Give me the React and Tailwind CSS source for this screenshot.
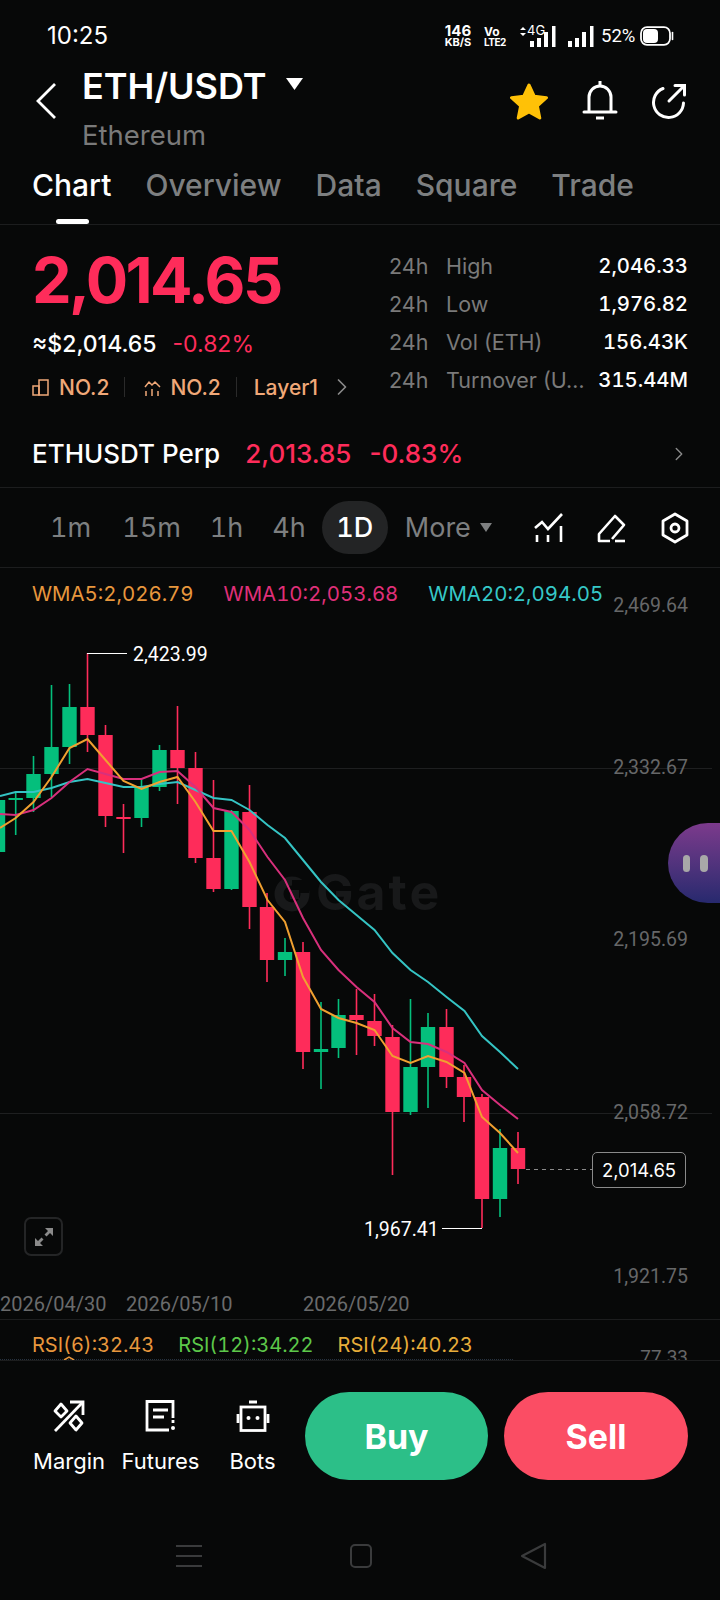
import React from "react"
import { ChevronRight } from "lucide-react"

const RED = "#fe2c5a"
const GREEN = "#04bf7c"

// x, wick top, body top, body bottom, wick bottom (page pixels)
const candles = [
  [-2, 790, 800, 852, 860, "g"],
  [15.7, 793, 798, 800, 835, "g"],
  [33.5, 756, 774, 798, 812, "g"],
  [51.5, 685, 747, 774, 797, "g"],
  [69.5, 684, 707, 747, 764, "g"],
  [87.5, 653, 707, 735, 752, "r"],
  [105.5, 725, 735, 816, 827, "r"],
  [123.5, 804, 817, 819, 853, "r"],
  [141.5, 778, 787, 818, 827, "g"],
  [159.5, 745, 750, 787, 791, "g"],
  [177.5, 706, 750, 768, 804, "r"],
  [195.5, 752, 768, 858, 863, "r"],
  [213.5, 780, 858, 889, 892, "r"],
  [231.5, 810, 811, 889, 890, "g"],
  [249.5, 785, 812, 907, 929, "r"],
  [267, 893, 907, 960, 982, "r"],
  [285, 938, 952, 960, 976, "g"],
  [303, 942, 952, 1052, 1069, "r"],
  [321, 1002, 1049, 1052, 1089, "g"],
  [338.5, 999, 1015, 1048, 1058, "g"],
  [356.5, 989, 1015, 1020, 1055, "r"],
  [374.5, 994, 1021, 1036, 1046, "r"],
  [392.5, 1025, 1037, 1112, 1175, "r"],
  [410.5, 999, 1067, 1112, 1115, "g"],
  [428, 1013, 1027, 1067, 1108, "g"],
  [446.5, 1009, 1027, 1077, 1088, "r"],
  [464, 1065, 1077, 1097, 1122, "r"],
  [482, 1094, 1097, 1199, 1228, "r"],
  [500, 1129, 1148, 1199, 1217, "g"],
  [518, 1132, 1148, 1169, 1184, "r"],
]

const wma5 = "0,828 15.7,818 33.5,802 51.5,777 69.5,748 87.5,739 105.5,760 123.5,781 141.5,789 159.5,782 177.5,777 195.5,802 213.5,831 231.5,831 249.5,862 267.5,900 285,922 303,977 321,1009 338.5,1018 356.5,1023 374.5,1030 392.5,1056 410.5,1063 428,1056 446.5,1062 464.5,1073 482,1117 500,1133 518,1153"
const wma10 = "0,814 15.7,815 33.5,810 51.5,798 69.5,782 87.5,769 105.5,774 123.5,779 141.5,779 159.5,772 177.5,771 195.5,787 213.5,808 231.5,812 249.5,830 267.5,857 285,880 303,918 321,950 338.5,970 356.5,987 374.5,1002 392.5,1028 410.5,1042 428,1044 446.5,1052 464.5,1063 482,1090 500,1105 518,1119"
const wma20 = "0,796 15.7,792 33.5,792 51.5,788 69.5,782 87.5,779 105.5,783 123.5,787 141.5,787 159.5,784 177.5,782 195.5,790 213.5,798 231.5,800 249.5,810 267.5,825 285,838 303,860 321,882 338.5,900 356.5,915 374.5,930 392.5,953 410.5,970 428,982 446.5,997 464.5,1011 482,1036 500,1052 518,1069"

const stats = [
  ["High", "2,046.33"],
  ["Low", "1,976.82"],
  ["Vol (ETH)", "156.43K"],
  ["Turnover (U…", "315.44M"],
]

const axisLabels = [
  ["2,469.64", 605],
  ["2,332.67", 767],
  ["2,195.69", 939],
  ["2,058.72", 1112],
  ["1,921.75", 1276],
]

const StatusBar = () => (
  <div className="h-[61px] shrink-0 flex items-center justify-between pl-[47px] pr-[46px] pt-[11px] text-white">
    <span className="text-[24px] leading-none">10:25</span>
    <div className="flex items-center">
      <div className="w-[30px] flex flex-col items-center font-bold">
        <span className="text-[15px] leading-[12px]">146</span>
        <span className="text-[11px] leading-[11px]">KB/S</span>
      </div>
      <div className="w-[27px] ml-[11px] flex flex-col font-bold">
        <span className="text-[12px] leading-[11px]">Vo</span>
        <span className="text-[10px] leading-[10px] tracking-[-0.5px]">LTE2</span>
      </div>
      <div className="relative ml-[7px] w-[38px] h-[22px]">
        <svg width="38" height="22" viewBox="0 0 38 22" fill="white" className="absolute inset-0">
          <path d="M2 5l3-3 3 3zM2 8l3 3 3-3z" />
          <rect x="12" y="16" width="4" height="6" />
          <rect x="19" y="13" width="4" height="9" />
          <rect x="26" y="7" width="4" height="15" />
          <rect x="34" y="1" width="3.500" height="21" />
        </svg>
        <span className="absolute left-[9px] -top-[1px] text-[13px] leading-[13px]">4G</span>
      </div>
      <svg width="26" height="22" viewBox="0 0 26 22" className="ml-[12px]" fill="white">
        <rect x="0" y="16" width="4" height="6" />
        <rect x="7" y="13" width="4" height="9" />
        <rect x="14" y="7" width="4" height="15" />
        <rect x="22" y="1" width="3.500" height="21" />
      </svg>
      <span className="text-[18.500px] leading-none font-['Roboto',sans-serif] ml-[7px] w-[39px]">52%</span>
      <svg width="34" height="20" viewBox="0 0 34 20" fill="none" stroke="white">
        <rect x="1" y="1.200" width="29" height="17.600" rx="6" strokeWidth="1.800" />
        <rect x="3" y="3" width="15" height="14" rx="4" fill="white" stroke="none" />
        <path d="M32.500 6.500v7" strokeWidth="1.600" strokeLinecap="round" />
      </svg>
    </div>
  </div>
)

const Header = () => (
  <div className="h-[84px] shrink-0 flex items-start overflow-hidden">
    <svg width="22" height="38" viewBox="0 0 22 38" fill="none" stroke="white" strokeWidth="2.800" className="ml-[35px] mt-[21px]">
      <path d="M20 2L3 19l17 17" />
    </svg>
    <div className="ml-[25px] flex flex-col">
      <div className="flex items-center h-[50px]">
        <span className="text-[36px] font-semibold text-white leading-none">ETH/USDT</span>
        <svg width="17" height="12" viewBox="0 0 17 12" className="ml-[19px] mb-[4px]" fill="white">
          <path d="M0 0h17l-8.500 12z" />
        </svg>
      </div>
      <span className="text-[27.500px] leading-none text-[#7a7a7a] mt-[11px]">Ethereum</span>
    </div>
    <div className="ml-auto mr-[33px] mt-[19px] flex items-center">
      <svg width="40" height="38" viewBox="0 0 40 38" className="mt-[2px]">
        <path
          d="M20 3l5.200 11.200 12.300 1.500-9.100 8.300 2.400 12L20 30l-10.800 6 2.400-12-9.100-8.300 12.300-1.500z"
          fill="#ffc107"
          stroke="#ffc107"
          strokeWidth="3"
          strokeLinejoin="round"
        />
      </svg>
      <svg width="36" height="40" viewBox="0 0 36 40" fill="none" stroke="white" strokeWidth="3" className="ml-[33px]">
        <path d="M7 31V17a11 11 0 0 1 22 0v14" />
        <path d="M2 32h32" strokeLinecap="round" />
        <path d="M18 1v4" />
        <path d="M14 38h8" />
      </svg>
      <svg width="36" height="36" viewBox="0 0 36 36" fill="none" stroke="white" strokeWidth="3" strokeLinecap="round" className="ml-[33px] mt-[1px]">
        <path d="M12 5.500A15 15 0 1 0 32.500 20" />
        <path d="M18 18L33 3" />
        <path d="M24 2.500h9.500V12" />
      </svg>
    </div>
  </div>
)

const Tabs = () => (
  <div className="h-[80px] shrink-0 relative flex gap-[34px] pl-[32px] pt-[20px] border-b border-[#1c1d1e] text-[30px] leading-[40px] font-medium text-[#7d7f80]">
    <span className="text-white">Chart</span>
    <span>Overview</span>
    <span>Data</span>
    <span>Square</span>
    <span>Trade</span>
    <div className="absolute left-[56px] bottom-0 w-[33px] h-[5px] rounded-full bg-white" />
  </div>
)

const TagBars = () => (
  <svg width="17" height="17" viewBox="0 0 17 17" fill="none" stroke="#f0a878" strokeWidth="1.500">
    <rect x="1" y="7" width="6" height="9" />
    <rect x="7" y="1" width="9" height="15" />
  </svg>
)

const TagChart = () => (
  <svg width="17" height="17" viewBox="0 0 17 17" fill="none" stroke="#f0a878" strokeWidth="1.500">
    <path d="M1 8l4-5 3 3 3-3 5 5" />
    <path d="M2 17v-5M8 17v-7M14 17v-5" />
  </svg>
)

const PriceInfo = () => (
  <div className="h-[190px] shrink-0 flex pl-[32px] pr-[32px]">
    <div className="w-[357px] flex flex-col">
      <span className="text-[63px] font-bold leading-none tracking-[-2.6px] text-[#fe2c5a] mt-[24px]">2,014.65</span>
      <div className="flex items-center gap-[16px] mt-[21px] text-[23px] leading-none">
        <span className="text-white font-medium">≈$2,014.65</span>
        <span className="text-[#fe2c5a]">-0.82%</span>
      </div>
      <div className="flex items-center mt-[17px] text-[21px] leading-none font-medium text-[#f0a878]">
        <TagBars />
        <span className="ml-[10px]">NO.2</span>
        <div className="w-px h-[20px] bg-[#2a2a2a] ml-[15px] mr-[19px]" />
        <TagChart />
        <span className="ml-[9px]">NO.2</span>
        <div className="w-px h-[20px] bg-[#2a2a2a] ml-[15px] mr-[17px]" />
        <span>Layer1</span>
        <ChevronRight className="w-[28px] h-[28px] ml-[10px] text-[#8a8a8a]" strokeWidth={1.5} />
      </div>
    </div>
    <div className="flex-1 flex flex-col gap-[8px] pt-[26px] text-[21.500px] leading-[30px]">
      {stats.map(([label, value]) => (
        <div key={label} className="flex items-center">
          <span className="w-[57px] text-[#7a7a7a]">24h</span>
          <span className="text-[#7a7a7a]">{label}</span>
          <span className="ml-auto text-white font-medium text-[20.300px] tabular-nums">{value}</span>
        </div>
      ))}
    </div>
  </div>
)

const PerpRow = () => (
  <div className="h-[73px] shrink-0 flex items-center pl-[32px] pr-[30px] pt-[6px] border-b border-[#1c1d1e] text-[26px] leading-none font-medium">
    <span className="text-white">ETHUSDT Perp</span>
    <span className="text-[#fe2c5a] ml-[25px]">2,013.85</span>
    <span className="text-[#fe2c5a] ml-[18px]">-0.83%</span>
    <ChevronRight className="w-[22px] h-[22px] ml-auto text-[#8a8a8a]" strokeWidth={1.5} />
  </div>
)

const Intervals = () => (
  <div className="h-[80px] shrink-0 flex items-center border-b border-[#1c1d1e] text-[27px] leading-none text-[#7d7f80] tabular-nums">
    <span className="ml-[50px]">1m</span>
    <span className="ml-[31px]">15m</span>
    <span className="ml-[29px]">1h</span>
    <span className="ml-[29px]">4h</span>
    <span className="ml-[16px] w-[66px] h-[53px] rounded-full bg-[#232425] flex items-center justify-center text-white font-medium">1D</span>
    <span className="ml-[17px]">More</span>
    <svg width="12" height="9" viewBox="0 0 12 9" className="ml-[9px]" fill="#7d7f80">
      <path d="M0 0h12L6 9z" />
    </svg>
    <svg width="30" height="30" viewBox="0 0 30 30" fill="none" stroke="white" strokeWidth="2.600" className="ml-[42px]">
      <path d="M1 15l7-6 6 7L28 1" />
      <path d="M3 22v7M14 22v7M27 13v16" />
    </svg>
    <svg width="30" height="30" viewBox="0 0 30 30" fill="none" stroke="white" strokeWidth="2.600" strokeLinejoin="round" className="ml-[33px]">
      <path d="M13 28H2v-7L18 3l9 9-12 14" />
      <path d="M18 28h10" />
    </svg>
    <svg width="30" height="32" viewBox="0 0 30 32" fill="none" stroke="white" strokeWidth="2.800" strokeLinejoin="round" className="ml-[33px]">
      <path d="M15 2l12 7v14l-12 7-12-7V9z" />
      <circle cx="15" cy="16" r="4" />
    </svg>
  </div>
)

const Chart = () => (
  <div className="h-[752px] shrink-0 relative border-b border-[#1c1d1e]">
    <svg width="720" height="752" viewBox="0 568 720 752" className="absolute inset-0 font-['Roboto',sans-serif]">
      <path d="M0 768.500h712M0 1113.500h712" stroke="#1e1f20" strokeWidth="1" />
      <circle cx="292" cy="894" r="13" fill="none" stroke="#18191a" strokeWidth="9" />
      <rect x="292" y="880" width="17" height="13" fill="#070808" />
      <rect x="290" y="890" width="9" height="9" fill="#18191a" />
      <text x="316" y="910" fontSize="50" fontWeight="700" letterSpacing="3" fontFamily="Inter" fill="#18191a">Gate</text>
      {candles.map(([x, wickTop, top, bottom, wickBottom, side]) => {
        const color = side === "r" ? RED : GREEN
        return (
          <g key={x} fill={color}>
            <rect x={x - 0.8} y={wickTop} width="1.600" height={wickBottom - wickTop} />
            <rect x={x - 7.2} y={top} width="14.400" height={Math.max(bottom - top, 2)} />
          </g>
        )
      })}
      <polyline points={wma20} fill="none" stroke="#35c4c4" strokeWidth="2" />
      <polyline points={wma10} fill="none" stroke="#d8307c" strokeWidth="2" />
      <polyline points={wma5} fill="none" stroke="#f0a030" strokeWidth="2" />
      <path d="M87 653.500h40M442 1228.500h40" stroke="white" strokeWidth="1" />
      <text x="133" y="661" fontSize="19.500" fill="white">2,423.99</text>
      <text x="364" y="1236" fontSize="19.500" fill="white">1,967.41</text>
      <path d="M526 1169.500h66" stroke="#8a8a8a" strokeDasharray="4 4" />
      {axisLabels.map(([label, y]) => (
        <text key={label} x="688" y={y + 7} fontSize="19.500" textAnchor="end" fill="#666768">{label}</text>
      ))}
      <text x="0" y="1311" fontSize="20" fill="#6a6b6c">2026/04/30</text>
      <text x="126" y="1311" fontSize="20" fill="#6a6b6c">2026/05/10</text>
      <text x="303" y="1311" fontSize="20" fill="#6a6b6c">2026/05/20</text>
    </svg>

    <div className="relative flex gap-[30px] pl-[32px] pt-[13px] text-[20.400px] leading-[26px] tabular-nums">
      <span className="text-[#e8973d]">WMA5:2,026.79</span>
      <span className="text-[#e0307a]">WMA10:2,053.68</span>
      <span className="text-[#36c8c8]">WMA20:2,094.05</span>
    </div>

    <div className="absolute left-[592px] top-[584px] w-[94px] h-[36px] rounded-[5px] border border-[#8a8a8a] bg-[#070808] flex items-center justify-center text-[18.500px] leading-none text-white">
      2,014.65
    </div>

    <div className="absolute left-[24px] top-[649px] w-[39px] h-[39px] rounded-[7px] border-2 border-[#242526] flex items-center justify-center">
      <svg width="20" height="20" viewBox="0 0 20 20" fill="#8a8a8a">
        <path d="M11 1h8v8l-3-3-3.500 3.500-2-2L14 4z" />
        <path d="M9 19H1v-8l3 3 3.500-3.500 2 2L6 16z" />
      </svg>
    </div>

    <div className="absolute right-0 top-[255px] w-[52px] h-[80px] rounded-l-[40px] bg-gradient-to-b from-[#7c3a8c] to-[#27296e] flex items-center gap-[10px] pl-[15px]">
      <div className="w-[7px] h-[17px] rounded-full bg-[#a8a8a8]" />
      <div className="w-[8px] h-[17px] rounded-full bg-[#a8a8a8]" />
    </div>
  </div>
)

const RsiRow = () => (
  <div className="h-[41px] shrink-0 relative overflow-hidden flex border-b border-[#1c1d1e] pl-[32px] pt-[12px] gap-[24px] text-[20px] leading-[26px] tabular-nums">
    <span className="text-[#e8973d]">RSI(6):32.43</span>
    <span className="text-[#5dc84a]">RSI(12):34.22</span>
    <span className="text-[#e8ad3a]">RSI(24):40.23</span>
    <span className="absolute right-[32px] top-[24px] text-[19px] font-['Roboto',sans-serif] text-[#666768]">77.33</span>
    <div className="absolute left-0 bottom-0 w-[513px] border-b border-dotted border-[#27323f]" />
    <svg width="12" height="4" viewBox="0 0 12 4" className="absolute left-[63px] bottom-0" fill="none" stroke="#e8973d" strokeWidth="1.500">
      <path d="M1 4l5-3 5 3" />
    </svg>
  </div>
)

const ActionItem = ({ label, width, children }) => (
  <div className={`${width} flex flex-col items-center`}>
    <div className="h-[32px] flex items-center justify-center">{children}</div>
    <span className="mt-[16px] text-[22px] leading-[26px] text-white">{label}</span>
  </div>
)

const ActionBar = () => (
  <div className="h-[139px] shrink-0 flex items-start pl-[34px] pr-[32px] pt-[31px]">
    <div className="flex pt-[8px]">
      <ActionItem label="Margin" width="w-[70px]">
        <svg width="32" height="32" viewBox="0 0 32 32" fill="none" stroke="white" strokeWidth="2.800">
          <path d="M2 31L29 3" />
          <path d="M17 2h13v13" />
          <path d="M8 4l6 7-6 6-6-6zM23 16l6 7-6 7-6-7z" strokeLinejoin="round" />
        </svg>
      </ActionItem>
      <div className="ml-[18px]">
        <ActionItem label="Futures" width="w-[77px]">
          <svg width="32" height="32" viewBox="0 0 32 32" fill="none" stroke="white" strokeWidth="2.800">
            <path d="M28 18V1.500H2v28.500h22" />
            <path d="M8 10h15M8 17h11" />
            <circle cx="28" cy="28" r="2" fill="white" stroke="none" />
            <path d="M28 20v3" />
          </svg>
        </ActionItem>
      </div>
      <div className="ml-[31px]">
        <ActionItem label="Bots" width="w-[45px]">
          <svg width="34" height="32" viewBox="0 0 34 32" fill="none" stroke="white" strokeWidth="2.800">
            <rect x="5" y="7" width="24" height="23.500" />
            <path d="M13 2h8M2 14v9M32 14v9" />
            <circle cx="12.500" cy="18" r="2" fill="white" stroke="none" />
            <circle cx="21.500" cy="18" r="2" fill="white" stroke="none" />
          </svg>
        </ActionItem>
      </div>
    </div>
    <button className="ml-[30px] w-[183px] h-[88px] rounded-full bg-[#2cbf88] text-white text-[34px] font-bold">Buy</button>
    <button className="ml-[16px] w-[184px] h-[88px] rounded-full bg-[#fb4d64] text-white text-[34px] font-bold">Sell</button>
  </div>
)

const NavBar = () => (
  <div className="flex-1 flex items-start pt-[42px]">
    <svg width="26" height="24" viewBox="0 0 26 24" className="ml-[176px] mt-[2px]" fill="#3a3b3c">
      <rect y="1" width="26" height="2" />
      <rect y="11" width="26" height="2" />
      <rect y="21" width="26" height="2" />
    </svg>
    <svg width="24" height="26" viewBox="0 0 24 26" fill="none" stroke="#3a3b3c" strokeWidth="2" className="ml-[147px] mt-[1px]">
      <rect x="2" y="2" width="20" height="22" rx="4" />
    </svg>
    <svg width="28" height="28" viewBox="0 0 28 28" fill="none" stroke="#3a3b3c" strokeWidth="2.200" strokeLinejoin="round" className="ml-[147px]">
      <path d="M25 2v24L2 14z" />
    </svg>
  </div>
)

export default function App() {
  return (
    <div className="w-[720px] h-[1600px] overflow-hidden flex flex-col bg-[#070808] font-['Inter',sans-serif]">
      <StatusBar />
      <Header />
      <Tabs />
      <PriceInfo />
      <PerpRow />
      <Intervals />
      <Chart />
      <RsiRow />
      <ActionBar />
      <NavBar />
    </div>
  )
}
